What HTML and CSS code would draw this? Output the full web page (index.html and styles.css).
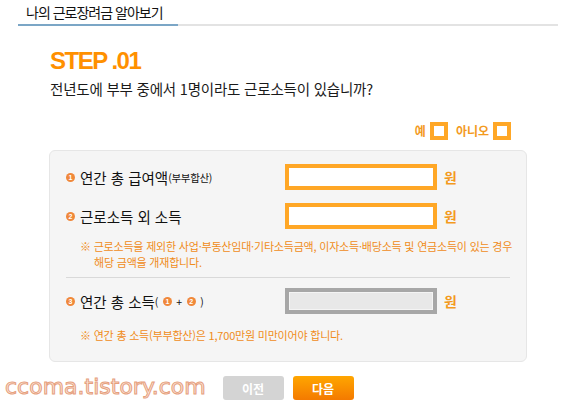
FILE: index.html
```html
<!DOCTYPE html>
<html lang="ko">
<head>
    <meta charset="UTF-8">
    <meta name="viewport" content="width=device-width, initial-scale=1.0">
    <title>나의 근로장려금 알아보기</title>
    <link rel="stylesheet" href="styles.css">
</head>
<body>

<div class="header">
    <h2>나의 근로장려금 알아보기</h2>
</div>

<div class="content">
    <div class="step">STEP .01</div>
    <p class="question">전년도에 부부 중에서 1명이라도 근로소득이 있습니까?</p>

    <div class="choices">
        <label class="choice">예 <span class="box"></span></label>
        <label class="choice">아니오 <span class="box"></span></label>
    </div>

    <div class="card">
        <div class="row">
            <div class="label"><span class="num">1</span>연간 총 급여액<small>(부부합산)</small></div>
            <input type="text" class="field">
            <span class="won">원</span>
        </div>
        <div class="row">
            <div class="label"><span class="num">2</span>근로소득 외 소득</div>
            <input type="text" class="field">
            <span class="won">원</span>
        </div>
        <p class="note">※ 근로소득을 제외한 사업·부동산임대·기타소득금액, 이자소득·배당소득 및 연금소득이 있는 경우<br>해당 금액을 개재합니다.</p>

        <hr class="divider">

        <div class="row">
            <div class="label"><span class="num">3</span>연간 총 소득<small class="sum">( <span class="num mini">1</span> + <span class="num mini">2</span> )</small></div>
            <input type="text" class="field disabled" disabled>
            <span class="won">원</span>
        </div>
        <p class="note last">※ 연간 총 소득(부부합산)은 1,700만원 미만이어야 합니다.</p>
    </div>

    <div class="footer">
        <span class="mark">ccoma.tistory.com</span>
        <button class="btn prev">이전</button>
        <button class="btn next">다음</button>
    </div>
</div>

</body>
</html>
```

FILE: styles.css
```css
body {
    margin: 0;
    padding: 0;
    font-family: "Noto Sans CJK KR", "Noto Sans", sans-serif;
    color: #222;
    background-color: #fff;
}
.header {
    margin: 0 22px 0 18px;
    border-bottom: 2px solid #e3e3e3;
    height: 24px;
}
.header h2 {
    margin: 0;
    width: 144px;
    height: 24px;
    padding: 0 8px;
    border-bottom: 2px solid #7ba6c6;
    font-size: 14px;
    font-weight: normal;
    line-height: 24px;
    color: #111;
    letter-spacing: -1px;
    white-space: nowrap;
}
.content {
    width: 478px;
    margin: 0 0 0 49px;
}
.step {
    margin: 21px 0 0 1px;
    font-family: "Liberation Sans", Arial, sans-serif;
    font-size: 24px;
    font-weight: bold;
    line-height: 28px;
    color: #ff9000;
    letter-spacing: -1.5px;
}
.question {
    margin: 5px 0 0 1px;
    font-size: 14.5px;
    line-height: 18px;
    letter-spacing: -0.2px;
    color: #1a1a1a;
}
.choices {
    display: flex;
    justify-content: flex-end;
    gap: 8px;
    margin: 24px 16px 0 0;
    height: 18px;
}
.choice {
    display: flex;
    align-items: center;
    gap: 4px;
    font-size: 12px;
    font-weight: bold;
    color: #f39a1e;
    line-height: 18px;
}
.box {
    display: inline-block;
    width: 10px;
    height: 10px;
    border: 4px solid #ffa726;
    background-color: #fff;
}
.card {
    margin-top: 10px;
    background-color: #f5f5f5;
    border: 1px solid #e6e6e6;
    border-radius: 6px;
    padding: 13px 16px 18px 16px;
}
.row {
    display: flex;
    align-items: center;
    height: 26px;
    margin-bottom: 13px;
}
.label {
    width: 219px;
    display: flex;
    align-items: center;
    font-size: 14.5px;
    color: #111;
}
.label small {
    font-size: 10.5px;
    letter-spacing: -0.3px;
    margin-top: 1px;
}
.num {
    display: inline-flex;
    justify-content: center;
    align-items: center;
    width: 9px;
    height: 9px;
    margin-right: 5px;
    border-radius: 50%;
    background-color: #f0883a;
    color: #fff;
    font-family: "Liberation Sans", Arial, sans-serif;
    font-size: 7px;
    font-weight: bold;
    line-height: 9px;
}
.num.mini {
    margin: 0 2px;
}
.sum {
    display: inline-flex;
    align-items: center;
    white-space: pre;
}
.field {
    box-sizing: border-box;
    width: 152px;
    height: 26px;
    margin: 0;
    padding: 0 4px;
    border: 4px solid #ffa726;
    background-color: #fff;
    outline: none;
}
.field.disabled {
    border-color: #a7a7a7;
    background-color: #e8e8e8;
    box-shadow: inset 0 0 0 1px #f4f4f4;
}
.won {
    margin-left: 7px;
    font-size: 14px;
    font-weight: bold;
    color: #f39a1e;
}
.note {
    margin: -4px 0 0 14px;
    padding-left: 14px;
    text-indent: -14px;
    font-size: 11px;
    line-height: 16px;
    letter-spacing: -0.2px;
    color: #f08c1a;
    white-space: nowrap;
}
.note.last {
    margin-top: 12px;
    margin-bottom: 0;
}
.divider {
    border: none;
    border-top: 1px solid #d9d9d9;
    margin: 7px 0 10px;
}
.footer {
    position: relative;
    display: flex;
    justify-content: center;
    gap: 9px;
    margin-top: 14px;
}
.mark {
    position: absolute;
    left: -44px;
    top: -1px;
    font-family: "DejaVu Sans", Verdana, sans-serif;
    font-size: 22px;
    line-height: 24px;
    letter-spacing: 0;
    color: #fbe6d8;
    -webkit-text-stroke: 1px #e6a07e;
}
.btn {
    width: 61px;
    height: 24px;
    border: none;
    border-radius: 3px;
    font-family: "Noto Sans CJK KR", sans-serif;
    font-size: 12px;
    font-weight: bold;
    color: #fff;
    cursor: pointer;
}
.prev {
    background-color: #d4d4d4;
}
.next {
    background: linear-gradient(#ffa600, #f47a00);
}
```
